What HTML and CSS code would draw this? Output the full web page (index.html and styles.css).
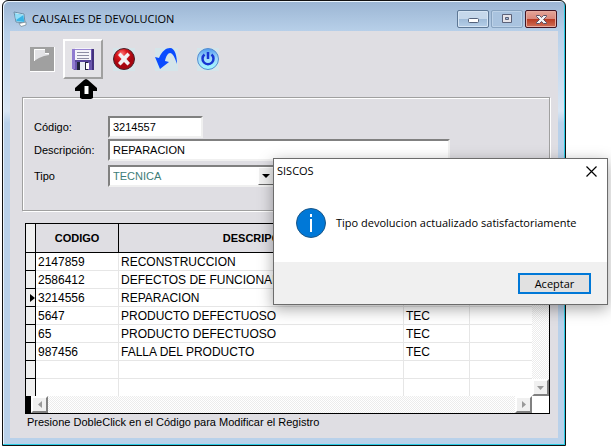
FILE: index.html
```html
<!DOCTYPE html>
<html lang="es">
<head>
<meta charset="utf-8">
<title>Causales de devolución</title>
<link rel="stylesheet" href="styles.css">
</head>
<body>
<main class="window">
  <header class="titlebar">
    <svg class="app-icon" width="16" height="16" viewBox="0 0 16 16" aria-hidden="true">
      <path d="M2 1l10 2 1 9-9-1z" fill="#e8faff" stroke="#6b8fa8"/>
      <path d="M3 2.500l8.500 1.500.7 7-7.800-.8z" fill="#38b4e6"/>
      <path d="M3 2.500l8.500 1.500-7.500 5z" fill="#93def8"/>
      <path d="M7 12.500l7-1.500v3l-5 1.500z" fill="#fff" stroke="#718590" stroke-width=".7"/>
    </svg>
    <h1 class="title">CAUSALES DE DEVOLUCION</h1>
    <div class="caption-buttons">
      <button class="caption" aria-label="Minimizar"><svg width="13" height="8" viewBox="0 0 13 8"><rect x="1.500" y="3.500" width="10" height="4" rx="1" fill="#fff" stroke="#53617b"/></svg></button>
      <button class="caption caption-dim" aria-label="Maximizar"><svg width="12" height="10" viewBox="0 0 12 10"><path d="M1.500.5h9v8h-9z" fill="#e6e4e9" stroke="#5b6178"/><path d="M4.500 3.500h3v2h-3z" fill="#9db9d8" stroke="#5b6178"/></svg></button>
      <button class="caption caption-close" aria-label="Cerrar ventana"><svg width="13" height="11" viewBox="0 0 13 11"><path d="M1.500 1.500h3l2 2 2-2h3v1l-3 3 3 3v1h-3l-2-2-2 2h-3v-1l3-3-3-3z" fill="#f4f4f6" stroke="#5a5266"/></svg></button>
    </div>
  </header>

  <div class="client">
    <div class="toolbar">
      <button class="tool" aria-label="Nuevo" disabled><svg width="25" height="25" viewBox="0 0 25 25"><path d="M0 0h25v25H0z" fill="#fff"/><path d="M0 0h24v24H0z" fill="#a0a0a0"/><path d="M4 2h11v4h4v2l-5 1-5 2-5 3z" fill="#e2e2e5"/><path d="M4.500 14V2.500H15M15 6.500h4" fill="none" stroke="#fff"/></svg></button>
      <button class="tool tool-raised" aria-label="Guardar"><svg width="23" height="23" viewBox="0 0 23 23"><path d="M0 1h22v21H2l-2-2z" fill="#6b57ad"/><path d="M0 1h3v20H0z" fill="#8f7bd0"/><path d="M20 1h2v21h-2z" fill="#44327e"/><path d="M3 0h16v12H3z" fill="#f4f4fa"/><path d="M3 1.500h16" stroke="#9b88d5"/><path d="M5 4.500h12M5 7.500h12M5 10.500h12" stroke="#8d8da5"/><path d="M3 12h16v2H3z" fill="#55459a"/><path d="M5 14h11v8H5z" fill="#e7edf5"/><path d="M5 14h3v8H5zM13 14h3v8h-3z" fill="#20243d"/><path d="M14 15h3v6h-3z" fill="#fff"/></svg></button>
      <button class="tool" aria-label="Cancelar"><svg width="24" height="24" viewBox="0 0 24 24"><defs><radialGradient id="red" cx=".4" cy=".25"><stop stop-color="#f77"/><stop offset=".5" stop-color="#d8171c"/><stop offset="1" stop-color="#a80610"/></radialGradient></defs><path d="M1 1h22v23H1z" fill="#d5e5ea"/><circle cx="12" cy="12" r="10.500" fill="url(#red)" stroke="#4b2029"/><path d="M6 8l2.500-2.500L12 9l3.500-3.500L18 8l-3.500 4 3.500 4-2.500 2.500L12 15l-3.500 3.500L6 16l3.500-4z" fill="#f2f2f4"/></svg></button>
      <button class="tool" aria-label="Deshacer"><svg width="24" height="24" viewBox="0 0 24 24"><path d="M1 1h23v23H1z" fill="#d5e5ea"/><path d="M1 10l4 1C8 4 12 1 16 1c5 0 7 8 7 16-2-6-4-11-7-11-2 0-4 3-5 8l4 1-9 7z" fill="#0a4cff"/></svg></button>
      <button class="tool" aria-label="Salir"><svg width="24" height="24" viewBox="0 0 24 24"><defs><linearGradient id="blue" x2="0" y2="1"><stop stop-color="#4d9cf0"/><stop offset=".45" stop-color="#a4d8fa"/><stop offset="1" stop-color="#9ffaff"/></linearGradient></defs><path d="M1 1h22v23H1z" fill="#d5e5ea"/><circle cx="12" cy="12" r="10.500" fill="url(#blue)" stroke="#568cd0"/><path d="M8.500 7.500a5.500 5.500 0 1 0 7 0" fill="none" stroke="#1736d2" stroke-width="2.500"/><path d="M12 5v7" stroke="#1736d2" stroke-width="2.500"/></svg></button>
      <svg class="pointer" width="22" height="20" viewBox="0 0 22 20" aria-hidden="true"><path d="M11 0l2 1 9 8v3h-4v7l-2 1H7l-2-1v-7H0V9l9-8z"/><path d="M9.500 7h4v8h-4z" fill="#fff"/></svg>
    </div>

    <form class="panel">
      <label for="codigo">Código:</label>
      <input class="field field-short" id="codigo" value="3214557">
      <label for="descripcion">Descripción:</label>
      <input class="field field-long" id="descripcion" value="REPARACION">
      <label class="row-tipo" for="tipo">Tipo</label>
      <div class="combo row-tipo">
        <select class="field" id="tipo"><option>TECNICA</option></select>
        <span class="combo-arrow"></span>
      </div>
    </form>

    <div class="grid">
      <table class="records">
        <colgroup><col class="c-mark"><col class="c-code"><col><col class="c-type"><col class="c-rest"></colgroup>
        <thead><tr><th></th><th>CODIGO</th><th>DESCRIPCION</th><th>TIPO</th><th></th></tr></thead>
        <tbody>
          <tr><td></td><td>2147859</td><td>RECONSTRUCCION</td><td>TEC</td><td></td></tr>
          <tr><td></td><td>2586412</td><td>DEFECTOS DE FUNCIONAMIENTO</td><td>TEC</td><td></td></tr>
          <tr><td><i class="current"></i></td><td>3214556</td><td>REPARACION</td><td>TEC</td><td></td></tr>
          <tr><td></td><td>5647</td><td>PRODUCTO DEFECTUOSO</td><td>TEC</td><td></td></tr>
          <tr><td></td><td>65</td><td>PRODUCTO DEFECTUOSO</td><td>TEC</td><td></td></tr>
          <tr><td></td><td>987456</td><td>FALLA DEL PRODUCTO</td><td>TEC</td><td></td></tr>
          <tr><td></td><td></td><td></td><td></td><td></td></tr>
          <tr class="last"><td></td><td></td><td></td><td></td><td></td></tr>
        </tbody>
      </table>
      <div class="vbar">
        <button class="scroll" aria-label="Subir"><svg width="7" height="4" viewBox="0 0 7 4"><path d="M0 4h7L3.500 0z"/></svg></button>
        <button class="scroll" aria-label="Bajar"><svg width="7" height="4" viewBox="0 0 7 4"><path d="M0 0h7L3.500 4z"/></svg></button>
      </div>
      <div class="hbar">
        <button class="scroll" aria-label="Izquierda"><svg width="4" height="7" viewBox="0 0 4 7"><path d="M4 0v7L0 3.500z"/></svg></button>
        <button class="scroll" aria-label="Derecha"><svg width="4" height="7" viewBox="0 0 4 7"><path d="M0 0v7l4-3.500z"/></svg></button>
      </div>
    </div>
    <p class="hint">Presione DobleClick en el Código para Modificar el Registro</p>
  </div>
</main>

<section class="dialog" role="dialog" aria-labelledby="dialog-title">
  <header class="dialog-head">
    <h2 class="dialog-title" id="dialog-title">SISCOS</h2>
    <button class="dialog-close" aria-label="Cerrar"><svg width="11" height="11" viewBox="0 0 11 11"><path d="M.5.5l10 10M10.500.5l-10 10" stroke="#000" stroke-width="1.200"/></svg></button>
  </header>
  <div class="dialog-body">
    <svg width="30" height="30" viewBox="0 0 30 30" aria-hidden="true"><circle cx="15" cy="15" r="14.500" fill="#0078d7" stroke="#1a5687"/><path d="M14 6h2v3h-2zM14 11h2v13h-2z" fill="#fff"/></svg>
    <p class="message">Tipo devolucion actualizado satisfactoriamente</p>
  </div>
  <footer class="dialog-foot"><button class="accept">Aceptar</button></footer>
</section>
</body>
</html>
```
FILE: styles.css
```css
* {
  box-sizing: border-box;
}

body {
  margin: 0;
  background: #fff;
  color: #000;
  font: 11px/16px "Liberation Sans", sans-serif;
}

button {
  padding: 0;
  font: inherit;
}

h1, h2, p {
  margin: 0;
  font-weight: 400;
}

/* Main window */
.window {
  margin: 0 45px 0 2px;
  padding: 0 7px 7px;
  border: 1px solid #111;
  border-radius: 6px 6px 0 0;
  background: linear-gradient(#9bb5d3, #b9d1ea 32px, #d9e6f4 110px, #b9d1ea 122px);
  box-shadow: inset -1px -1px #29cbe4, inset 1px 1px #e9f4fd;
}

.titlebar {
  display: flex;
  align-items: center;
  gap: 4px;
  height: 30px;
  padding: 8px 1px 0 2px;
}

.app-icon {
  margin-bottom: 2px;
}

.title {
  flex: 1;
  margin-bottom: 2px;
  font: 11px/16px "Open Sans", sans-serif;
}

.caption-buttons {
  display: flex;
  gap: 2px;
  margin-bottom: 2px;
}

.caption {
  display: grid;
  place-items: center;
  width: 32px;
  height: 18px;
  border: 1px solid #5d7795;
  border-radius: 2px;
  background: linear-gradient(#c6d8eb 50%, #9fbbd8 50%, #b5cee8);
  box-shadow: inset 0 0 0 1px #d6e5f4;
}

.caption-dim {
  border-color: #88a3c0;
  background: #a9c3df;
  box-shadow: inset 0 0 0 1px #bdd2e8;
}

.caption-close {
  border-color: #431422;
  background: linear-gradient(#e5a598, #d9877a 50%, #b83a22 50%, #cf6f58);
  box-shadow: inset 0 0 0 1px #e6aba0;
}

.client {
  padding: 8px 8px 8px 12px;
  background: #dfdee3;
}

.toolbar {
  position: relative;
  display: flex;
  align-items: center;
  gap: 18px;
  height: 40px;
  padding-left: 8px;
}

.tool {
  display: grid;
  place-items: center;
  width: 24px;
  height: 40px;
  border: 0;
  background: none;
}

.tool-raised {
  width: 40px;
  margin: 0 -9px;
  border: 2px solid;
  border-color: #fff #a0a0a0 #a0a0a0 #fff;
  background: #e4e3e7;
}

.pointer {
  position: absolute;
  top: 40px;
  left: 53px;
}

/* Record form */
.panel {
  display: grid;
  grid-template-columns: 74px 1fr;
  align-items: center;
  row-gap: 1px;
  margin-top: 18px;
  padding: 18px 11px 23px;
  border: 1px solid #a0a0a0;
  box-shadow: 1px 1px #fff, inset 1px 1px #fff;
}

.field {
  width: 100%;
  height: 22px;
  padding: 0 2px 0 3px;
  border: 2px solid;
  border-color: #808080 #f0f0f0 #f0f0f0 #808080;
  border-radius: 0;
  background: #fff;
  color: #000;
  font: 11px/16px "Liberation Sans", sans-serif;
}

.field-short {
  width: 95px;
}

.field-long {
  max-width: 342px;
}

.row-tipo {
  margin-top: 3px;
}

.combo {
  position: relative;
  width: 168px;
}

.combo .field {
  display: block;
  appearance: none;
  color: #3d7d78;
}

.combo-arrow {
  position: absolute;
  top: 2px;
  right: 2px;
  display: grid;
  place-items: center;
  width: 16px;
  height: 18px;
  border: 1px solid;
  border-color: #fff #696969 #696969 #fff;
  background: #f0f0f0;
  pointer-events: none;
}

.combo-arrow::after {
  content: "";
  border: 4px solid transparent;
  border-top-color: #000;
  border-bottom: 0;
}

/* Records grid */
.grid {
  display: grid;
  grid-template-columns: 1fr 17px;
  margin: 12px 0 0 3px;
  border: 1px solid #000;
  background: #fff;
}

.records {
  width: 100%;
  table-layout: fixed;
  border-collapse: separate;
  border-spacing: 0;
  font-size: 12px;
}

.c-mark {
  width: 10px;
}

.c-code {
  width: 83px;
}

.c-type {
  width: 66px;
}

.c-rest {
  width: 62px;
}

.records th {
  height: 29px;
  padding: 0;
  border-right: 1px solid #000;
  border-bottom: 1px solid #000;
  background: #dfdee3;
  font-size: 11px;
}

.records td {
  height: 18px;
  padding: 0 2px;
  border-right: 1px solid #e6e6e6;
  border-bottom: 1px solid #e6e6e6;
  line-height: 16px;
  white-space: nowrap;
}

.records td:first-child {
  border-color: #000;
  background: #f0f0f0;
}

.records th:first-child {
  background: #f0f0f0;
}

.records .last td {
  height: 17px;
  border-bottom: 0;
}

.records td:last-child {
  border-right: 0;
}

.current {
  display: block;
  width: 5px;
  margin-left: 2px;
  border: 4px solid transparent;
  border-left: 5px solid #000;
  border-right: 0;
}

.vbar,
.hbar {
  display: flex;
  justify-content: space-between;
  background: repeating-conic-gradient(#ececec 0 25%, #fff 0 50%) 0 0 / 2px 2px;
}

.vbar {
  flex-direction: column;
}

.hbar {
  border-left: 5px solid #000;
}

.scroll {
  display: grid;
  place-items: center;
  width: 17px;
  height: 17px;
  border: 2px solid;
  border-color: #fff #808080 #808080 #fff;
  background: #f0f0f0;
  fill: #999;
}

.hint {
  margin-left: 5px;
}

/* Message dialog */
.dialog {
  position: absolute;
  top: 158px;
  right: 3px;
  width: 335px;
  border: 1px solid #6c6c6c;
  background: #fff;
  box-shadow: 0 4px 14px rgba(0, 0, 0, 0.35);
  font: 11px/16px "Open Sans", sans-serif;
}

.dialog-head {
  display: flex;
  align-items: center;
  justify-content: space-between;
  height: 24px;
  padding: 0 10px 0 3px;
}

.dialog-title {
  font-size: 11px;
}

.dialog-close {
  display: grid;
  place-items: center;
  border: 0;
  background: none;
}

.dialog-body {
  display: flex;
  align-items: center;
  gap: 10px;
  height: 79px;
  padding: 0 22px;
}

.dialog-foot {
  display: flex;
  justify-content: flex-end;
  padding: 11px 16px 10px;
  background: #f0f0f0;
}

.accept {
  width: 73px;
  height: 21px;
  border: 2px solid #0078d7;
  background: #e1e1e1;
}
```
